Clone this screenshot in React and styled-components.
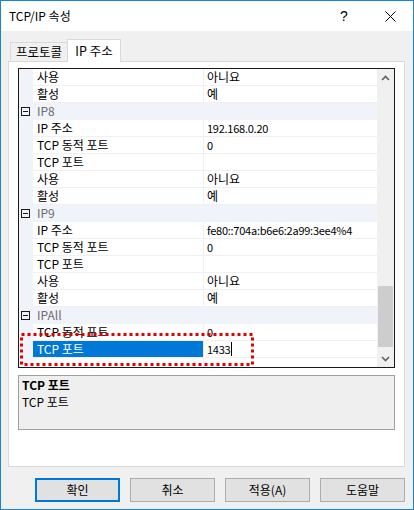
import React from 'react';
import styled, { createGlobalStyle } from 'styled-components';

const GlobalStyle = createGlobalStyle`
  html, body { margin: 0; padding: 0; background: #ffffff; }
  body { font-family: "Noto Sans CJK KR", "Noto Sans", sans-serif; font-size: 12px; color: #000; }
  * { box-sizing: border-box; }
`;

const Window = styled.div`
  width: 414px;
  height: 510px;
  border: 1px solid #1883d7;
  display: flex;
  flex-direction: column;
  background: #f0f0f0;
`;

const TitleBar = styled.div`
  height: 30px;
  background: #ffffff;
  display: flex;
  align-items: center;
  padding-left: 8px;
  line-height: 16px;
`;

const Title = styled.div`
  flex: 1;
  font-size: 12px;
`;

const TitleButton = styled.div`
  width: 46px;
  height: 30px;
  display: flex;
  align-items: center;
  justify-content: center;
  font-size: 14px;
  font-family: "Liberation Sans", sans-serif;
`;

const Body = styled.div`
  flex: 1;
  display: flex;
  flex-direction: column;
  padding: 8px 8px 0 7px;
`;

const TabStrip = styled.div`
  display: flex;
  align-items: flex-end;
  height: 23px;
  padding-left: 2px;
  position: relative;
  z-index: 1;
`;

const Tab = styled.div`
  width: ${p => (p.$active ? '54px' : '58px')};
  height: ${p => (p.$active ? '23px' : '20px')};
  background: ${p => (p.$active ? '#ffffff' : '#f0f0f0')};
  border: 1px solid #d9d9d9;
  border-bottom: ${p => (p.$active ? 'none' : '1px solid #d9d9d9')};
  margin-left: ${p => (p.$active ? '-1px' : '0')};
  display: flex;
  align-items: center;
  justify-content: center;
  font-size: 12.5px;
  line-height: 16px;
`;

const Panel = styled.div`
  height: 406px;
  margin-top: -1px;
  background: #ffffff;
  border: 1px solid #d9d9d9;
  padding: 6px 9px 0 9px;
  display: flex;
  flex-direction: column;
`;

const Grid = styled.div`
  position: relative;
  height: 300px;
  border: 1px solid #1a1a1a;
  display: flex;
  overflow: hidden;
`;

const Rows = styled.div`
  flex: 1;
  display: flex;
  flex-direction: column;
`;

const Row = styled.div`
  height: 17px;
  flex: none;
  display: flex;
  background: ${p => (p.$category ? '#f0f3f9' : '#ffffff')};
  line-height: 16px;
`;

const Gutter = styled.div`
  width: 14px;
  flex: none;
  background: #f0f3f9;
  display: flex;
  align-items: center;
  justify-content: flex-end;
  padding-right: 2px;
`;

const Toggle = styled.div`
  width: 9px;
  height: 9px;
  border: 1px solid #1a1a1a;
  position: relative;
  margin-right: 1px;
  &::after {
    content: '';
    position: absolute;
    left: 1px;
    right: 1px;
    top: 3px;
    height: 1px;
    background: #1a1a1a;
  }
`;

const CategoryName = styled.div`
  flex: 1;
  padding-left: 4px;
  color: #6d6d6d;
`;

const NameCell = styled.div`
  width: 171px;
  flex: none;
  padding-left: 4px;
  border-bottom: 1px solid #f0f0f0;
  border-right: 1px solid #f0f0f0;
  background: ${p => (p.$selected ? '#0078d7' : 'transparent')};
  color: ${p => (p.$selected ? '#ffffff' : '#000000')};
  white-space: nowrap;
`;

const ValueCell = styled.div`
  flex: 1;
  padding-left: 3px;
  border-bottom: 1px solid #f0f0f0;
  white-space: nowrap;
  overflow: hidden;
  display: flex;
  align-items: center;
  font-size: ${p => (p.$latin ? '11px' : '12px')};
  letter-spacing: ${p => (p.$latin ? '-0.25px' : '0')};
`;

const Caret = styled.span`
  width: 1px;
  height: 14px;
  background: #000;
  margin-left: 1px;
`;

const ScrollBar = styled.div`
  width: 17px;
  flex: none;
  background: #f0f0f0;
  display: flex;
  flex-direction: column;
  align-items: center;
`;

const ScrollArrow = styled.div`
  height: 17px;
  width: 17px;
  display: flex;
  align-items: center;
  justify-content: center;
`;

const ScrollTrack = styled.div`
  flex: 1;
  width: 15px;
  display: flex;
  flex-direction: column;
  justify-content: flex-end;
  padding-bottom: 3px;
`;

const Thumb = styled.div`
  height: 61px;
  background: #cdcdcd;
`;

const Marker = styled.svg`
  position: absolute;
  left: 1px;
  top: 264px;
  pointer-events: none;
`;

const Description = styled.div`
  margin-top: 7px;
  height: 55px;
  border: 1px solid #a0a0a0;
  background: #efefef;
  padding: 1px 3px;
  line-height: 16px;
`;

const DescTitle = styled.div`
  font-weight: bold;
`;

const DescText = styled.div`
  margin-top: 1px;
`;

const ButtonRow = styled.div`
  flex: 1;
  display: flex;
  justify-content: flex-end;
  align-items: flex-start;
  gap: 10px;
  padding-top: 11px;
`;

const Button = styled.div`
  width: 85px;
  height: 24px;
  background: #e1e1e1;
  border: ${p => (p.$default ? '2px solid #0078d7' : '1px solid #adadad')};
  display: flex;
  align-items: center;
  justify-content: center;
  line-height: 16px;
`;

const Chevron = ({ down }) => (
  <svg width="9" height="6" viewBox="0 0 9 6">
    <path
      d={down ? 'M1 1 L4.5 4.5 L8 1' : 'M1 5 L4.5 1.5 L8 5'}
      fill="none"
      stroke="#606060"
      strokeWidth="1.6"
    />
  </svg>
);

const rows = [
  { name: '사용', value: '아니요' },
  { name: '활성', value: '예' },
  { category: 'IP8' },
  { name: 'IP 주소', value: '192.168.0.20' },
  { name: 'TCP 동적 포트', value: '0' },
  { name: 'TCP 포트', value: '' },
  { name: '사용', value: '아니요' },
  { name: '활성', value: '예' },
  { category: 'IP9' },
  { name: 'IP 주소', value: 'fe80::704a:b6e6:2a99:3ee4%4' },
  { name: 'TCP 동적 포트', value: '0' },
  { name: 'TCP 포트', value: '' },
  { name: '사용', value: '아니요' },
  { name: '활성', value: '예' },
  { category: 'IPAll' },
  { name: 'TCP 동적 포트', value: '0' },
  { name: 'TCP 포트', value: '1433', selected: true },
  { name: '', value: '' },
];

const isLatin = v => /^[\x20-\x7e]+$/.test(v);

const App = () => {
  return (
    <>
      <GlobalStyle />
      <Window>
        <TitleBar>
          <Title>TCP/IP 속성</Title>
          <TitleButton>?</TitleButton>
          <TitleButton>
            <svg width="11" height="11" viewBox="0 0 11 11">
              <path d="M0.5 0.5 L10.5 10.5 M10.5 0.5 L0.5 10.5" stroke="#000" strokeWidth="1" />
            </svg>
          </TitleButton>
        </TitleBar>
        <Body>
          <TabStrip>
            <Tab>프로토콜</Tab>
            <Tab $active>IP 주소</Tab>
          </TabStrip>
          <Panel>
            <Grid>
              <Rows>
                {rows.map((r, i) =>
                  r.category ? (
                    <Row key={i} $category>
                      <Gutter>
                        <Toggle />
                      </Gutter>
                      <CategoryName>{r.category}</CategoryName>
                    </Row>
                  ) : (
                    <Row key={i}>
                      <Gutter />
                      <NameCell $selected={r.selected}>{r.name}</NameCell>
                      <ValueCell $latin={isLatin(r.value)}>
                        {r.value}
                        {r.selected && <Caret />}
                      </ValueCell>
                    </Row>
                  )
                )}
              </Rows>
              <ScrollBar>
                <ScrollArrow>
                  <Chevron />
                </ScrollArrow>
                <ScrollTrack>
                  <Thumb />
                </ScrollTrack>
                <ScrollArrow>
                  <Chevron down />
                </ScrollArrow>
              </ScrollBar>
              <Marker width="234" height="34" viewBox="0 0 234 34">
                <rect
                  x="1.5"
                  y="1.5"
                  width="231"
                  height="30"
                  fill="none"
                  stroke="#e00000"
                  strokeWidth="3"
                  strokeDasharray="3 3"
                />
              </Marker>
            </Grid>
            <Description>
              <DescTitle>TCP 포트</DescTitle>
              <DescText>TCP 포트</DescText>
            </Description>
          </Panel>
          <ButtonRow>
            <Button $default>확인</Button>
            <Button>취소</Button>
            <Button>적용(A)</Button>
            <Button>도움말</Button>
          </ButtonRow>
        </Body>
      </Window>
    </>
  );
};

export default App;
